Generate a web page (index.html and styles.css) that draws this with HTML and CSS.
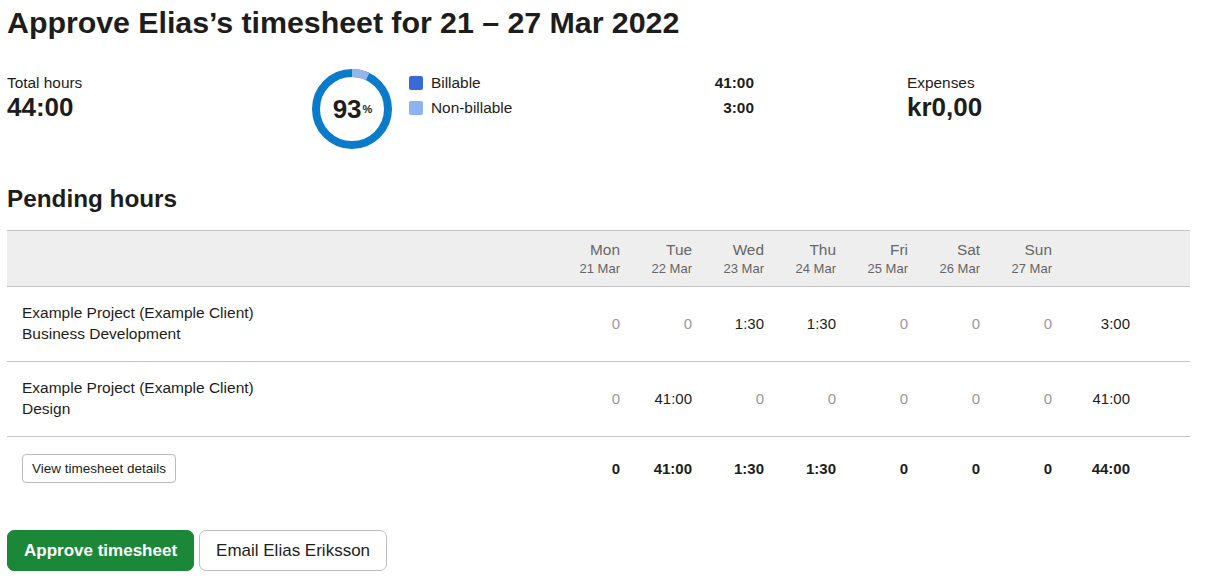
FILE: index.html
```html
<!DOCTYPE html>
<html lang="en">
<head>
<meta charset="utf-8">
<title>Approve timesheet</title>
<link rel="stylesheet" href="styles.css">
</head>
<body>
<main class="page">
  <h1 class="title">Approve Elias’s timesheet for 21 – 27 Mar 2022</h1>

  <section class="summary">
    <div class="stat">
      <div class="stat-label">Total hours</div>
      <div class="stat-value">44:00</div>
    </div>
    <div class="donut">
      <svg width="82" height="82" viewBox="0 0 82 82">
        <circle cx="41" cy="41" r="36" fill="none" stroke="#0a7acb" stroke-width="8"/>
        <circle cx="41" cy="41" r="36" fill="none" stroke="#93b5e8" stroke-width="8"
          stroke-dasharray="16.2 300" transform="rotate(-90 41 41)"/>
      </svg>
      <div class="donut-label">93<sup>%</sup></div>
    </div>
    <div class="legend">
      <div class="legend-row"><span class="swatch billable"></span><span class="legend-name">Billable</span><span class="legend-val">41:00</span></div>
      <div class="legend-row"><span class="swatch nonbillable"></span><span class="legend-name">Non-billable</span><span class="legend-val">3:00</span></div>
    </div>
    <div class="stat expenses">
      <div class="stat-label">Expenses</div>
      <div class="stat-value">kr0,00</div>
    </div>
  </section>

  <h2 class="section-title">Pending hours</h2>

  <div class="table">
    <div class="row head">
      <div class="cell label"></div>
      <div class="cell day"><span class="dname">Mon</span><span class="ddate">21 Mar</span></div>
      <div class="cell day"><span class="dname">Tue</span><span class="ddate">22 Mar</span></div>
      <div class="cell day"><span class="dname">Wed</span><span class="ddate">23 Mar</span></div>
      <div class="cell day"><span class="dname">Thu</span><span class="ddate">24 Mar</span></div>
      <div class="cell day"><span class="dname">Fri</span><span class="ddate">25 Mar</span></div>
      <div class="cell day"><span class="dname">Sat</span><span class="ddate">26 Mar</span></div>
      <div class="cell day"><span class="dname">Sun</span><span class="ddate">27 Mar</span></div>
      <div class="cell total"></div>
    </div>
    <div class="row body">
      <div class="cell label">Example Project (Example Client)<br>Business Development</div>
      <div class="cell num zero">0</div>
      <div class="cell num zero">0</div>
      <div class="cell num">1:30</div>
      <div class="cell num">1:30</div>
      <div class="cell num zero">0</div>
      <div class="cell num zero">0</div>
      <div class="cell num zero">0</div>
      <div class="cell num total">3:00</div>
    </div>
    <div class="row body">
      <div class="cell label">Example Project (Example Client)<br>Design</div>
      <div class="cell num zero">0</div>
      <div class="cell num">41:00</div>
      <div class="cell num zero">0</div>
      <div class="cell num zero">0</div>
      <div class="cell num zero">0</div>
      <div class="cell num zero">0</div>
      <div class="cell num zero">0</div>
      <div class="cell num total">41:00</div>
    </div>
    <div class="row foot">
      <div class="cell label"><button class="btn-small">View timesheet details</button></div>
      <div class="cell num">0</div>
      <div class="cell num">41:00</div>
      <div class="cell num">1:30</div>
      <div class="cell num">1:30</div>
      <div class="cell num">0</div>
      <div class="cell num">0</div>
      <div class="cell num">0</div>
      <div class="cell num total">44:00</div>
    </div>
  </div>

  <div class="actions">
    <button class="btn btn-primary">Approve timesheet</button>
    <button class="btn btn-secondary">Email Elias Eriksson</button>
  </div>
</main>
</body>
</html>
```

FILE: styles.css
```css
* { box-sizing: border-box; }
html, body { margin: 0; padding: 0; background: #fff; }
body {
  font-family: "Liberation Sans", Arial, sans-serif;
  color: #1d1d1b;
}
.page { padding: 0 15px 0 7px; width: 1205px; }

.title {
  margin: 0;
  padding-top: 4px;
  font-size: 30.4px;
  line-height: 36px;
  font-weight: bold;
  letter-spacing: -0.05px;
}

.summary {
  display: flex;
  align-items: flex-start;
  margin-top: 30px;
  height: 84px;
}
.stat-label { font-size: 15.4px; line-height: 18px; }
.stat-value { font-size: 26px; font-weight: bold; line-height: 30px; }
.summary > .stat:first-child { width: 304px; margin-top: 4px; }

.donut { position: relative; width: 82px; height: 82px; margin-top: -2px; }
.donut svg { display: block; }
.donut-label {
  position: absolute; inset: 0;
  display: flex; align-items: center; justify-content: center;
  font-size: 26px; font-weight: bold;
  padding-left: 1px;
}
.donut-label sup { font-size: 11px; vertical-align: top; line-height: 16px; margin-left: 1px; }

.legend { margin-left: 16px; width: 345px; margin-top: 0; }
.legend-row { display: flex; align-items: center; height: 25px; font-size: 15.4px; }
.swatch { width: 14px; height: 14px; border-radius: 2px; margin-right: 8px; }
.swatch.billable { background: #3a69d8; }
.swatch.nonbillable { background: #8ab3ef; }
.legend-name { flex: 1; }
.legend-val { font-weight: bold; }
.expenses { margin-left: 153px; margin-top: 4px; }

.section-title {
  margin: 30px 0 0;
  font-size: 24.3px;
  line-height: 30px;
  font-weight: bold;
}

.table { margin-top: 16px; width: 1183px; }
.row {
  display: grid;
  grid-template-columns: 1fr repeat(7, 72px) 78px;
  padding: 0 60px 0 15px;
  border-bottom: 1px solid #c4c4c4;
}
.row.head {
  background: #eeeeee;
  border-top: 1px solid #c4c4c4;
  height: 57px;
  align-items: center;
  padding-top: 1px;
}
.row.body { height: 75px; align-items: center; padding-bottom: 2px; }
.row.foot { border-bottom: none; height: 62px; align-items: center; }

.cell.day { display: flex; flex-direction: column; align-items: flex-end; color: #666; }
.dname { font-size: 15.4px; line-height: 19px; }
.ddate { font-size: 13px; line-height: 19px; }

.cell.label { font-size: 15.5px; line-height: 21px; }
.cell.num { text-align: right; font-size: 15px; }
.cell.num.zero { color: #9a9a9a; }
.row.foot .cell.num { font-weight: bold; }

.btn-small {
  font-family: inherit;
  font-size: 13.5px;
  color: #1d1d1b;
  background: #fff;
  border: 1px solid #bbb;
  border-radius: 4px;
  height: 29px;
  padding: 0 9px;
}

.actions { display: flex; gap: 5px; margin-top: 31px; }
.btn {
  font-family: inherit;
  font-size: 17px;
  height: 41px;
  border-radius: 7px;
  padding: 0 16px;
}
.btn-primary { background: #1b8738; color: #fff; border: 1px solid #1b8738; font-weight: bold; }
.btn-secondary { background: #fff; color: #1d1d1b; border: 1px solid #bdbdbd; }
```
